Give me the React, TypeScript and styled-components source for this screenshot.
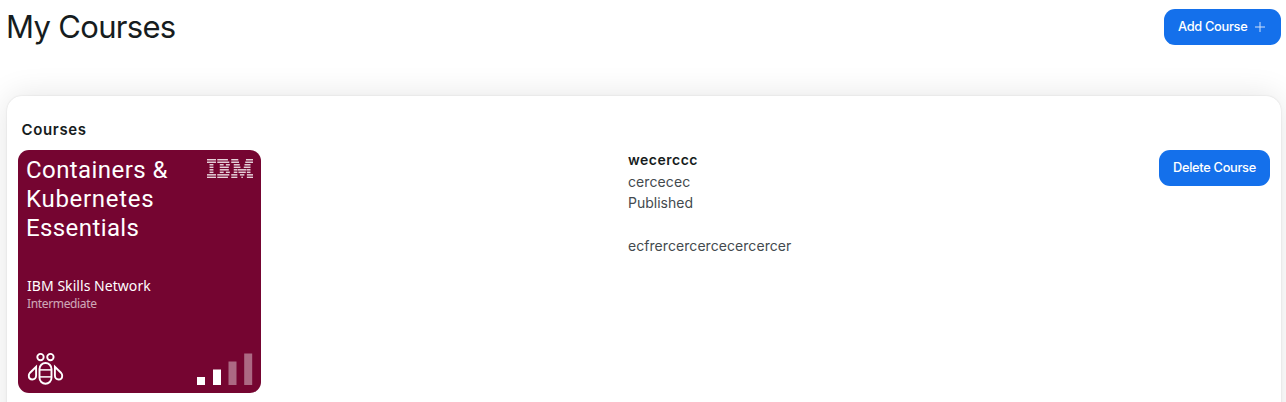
import React from "react";
import styled, { createGlobalStyle } from "styled-components";

const GlobalStyle = createGlobalStyle`
  * { box-sizing: border-box; }
  body { margin: 0; background: #fff; color: #161c20; font-family: Inter, "Open Sans", sans-serif; }
`;

const Page = styled.main`
  height: 100vh;
  overflow: hidden;
  padding: 9px 5px 0 7px;
`;

const Header = styled.header`
  display: flex;
  justify-content: space-between;
  align-items: flex-start;
  height: 87px;
`;

const Title = styled.h1`
  margin: 0 0 0 -1px;
  font-size: 31px;
  line-height: 36px;
  font-weight: 400;
  letter-spacing: -0.68px;
  white-space: nowrap;
`;

const Button = styled.button<{ $width: number }>`
  display: flex;
  align-items: center;
  gap: 7px;
  width: ${(p) => p.$width}px;
  height: 36px;
  padding: 0 14px 1px;
  border: 0;
  border-radius: 11px;
  background: #1470eb;
  color: #fff;
  font: 500 12.8px/20px Inter, sans-serif;
  letter-spacing: -0.3px;
  white-space: nowrap;
`;

const Panel = styled.section`
  height: 420px;
  padding: 22px 11px 0;
  border-radius: 15px;
  background: #fff;
  box-shadow: 0 0 2px rgba(0, 0, 0, 0.12), 0 0 32px rgba(0, 0, 0, 0.11);
`;

const PanelTitle = styled.h2`
  margin: 0 0 8px 3.5px;
  font-size: 15px;
  line-height: 24px;
  font-weight: 600;
  letter-spacing: 0.65px;
`;

const CourseRow = styled.article`
  display: grid;
  grid-template-columns: 610px 1fr auto;
  align-items: start;
`;

const Cover = styled.div`
  display: flex;
  flex-direction: column;
  width: 243px;
  height: 243px;
  padding: 5px 8px 8px 9px;
  border-radius: 11px;
  background: #750531;
  color: #fff;
  font-family: "Noto Sans", sans-serif;
`;

const CoverTop = styled.div`
  display: flex;
  justify-content: space-between;
  height: 122px;

  svg { margin-top: 4px; }
`;

const CoverHeading = styled.div`
  padding-top: 1px;
`;

const CoverLine = styled.div<{ $spacing: number }>`
  margin-left: -1px;
  font-family: Roboto, sans-serif;
  font-size: 24px;
  line-height: 29px;
  letter-spacing: ${(p) => p.$spacing}px;
  white-space: nowrap;
`;

const Provider = styled.div`
  font-size: 14px;
  line-height: 18px;
  letter-spacing: 0.05px;
`;

const Level = styled.div`
  font-size: 12px;
  line-height: 17px;
  letter-spacing: -0.35px;
  opacity: 0.65;
`;

const CoverBottom = styled.div`
  display: flex;
  justify-content: space-between;
  align-items: flex-end;
  margin-top: auto;
`;

const Details = styled.div`
  margin-top: -1px;
  font-size: 14px;
  line-height: 21.6px;
  color: #434a4e;
`;

const Name = styled.h3`
  margin: 0;
  font-size: 14px;
  line-height: 21.6px;
  font-weight: 600;
  letter-spacing: 0.5px;
  color: #161c20;
`;

const DetailLine = styled.p<{ $spacing?: number; $gap?: number }>`
  margin: ${(p) => p.$gap ?? 0}px 0 0;
  letter-spacing: ${(p) => p.$spacing ?? 0}px;
`;

const IBM_STRIPES: [number, number][][] = [
  [[0, 195], [223, 455], [527, 680], [847, 1000]],
  [[0, 195], [223, 484], [527, 696], [831, 1000]],
  [[55, 140], [277, 362], [410, 496], [581, 712], [815, 946]],
  [[55, 140], [277, 474], [581, 727], [799, 946]],
  [[55, 140], [277, 474], [581, 660], [668, 859], [867, 946]],
  [[55, 140], [277, 362], [410, 496], [581, 660], [684, 843], [867, 946]],
  [[0, 195], [223, 484], [527, 660], [715, 812], [867, 1000]],
  [[0, 195], [223, 455], [527, 660], [747, 780], [867, 1000]],
];

const IbmLogo = () => (
  <svg width="46" height="19" viewBox="0 0 1000 400" preserveAspectRatio="none" fill="#fff" opacity="0.82">
    {IBM_STRIPES.flatMap((row, y) =>
      row.map(([a, b]) => <rect key={`${y}-${a}`} x={a} y={y * 53} width={b - a} height="31" />)
    )}
  </svg>
);

const Bee = () => (
  <svg width="37" height="33" viewBox="0 0 37 33" fill="none" stroke="#fff" strokeWidth="1.9">
    <circle cx="13.5" cy="5.1" r="3.2" />
    <circle cx="23.4" cy="5.1" r="3.2" />
    <rect x="12.5" y="11" width="12" height="20.8" rx="6" />
    <path d="M12.5 17.9h12M12.5 24.9h12" opacity="0.85" />
    <path d="M9.1 14.8v8.7c0 2.2-1.5 4-3.7 4s-3.6-1.7-3.6-3.8c0-1.1.4-2 1-2.7z" />
    <path d="M27.9 14.8v8.7c0 2.2 1.5 4 3.7 4s3.6-1.7 3.6-3.8c0-1.1-.4-2-1-2.7z" />
  </svg>
);

const LevelBars = () => (
  <svg width="56" height="32" viewBox="0 0 56 32" fill="#fff">
    <rect x="0" y="24" width="8" height="8" />
    <rect x="16" y="16.5" width="8" height="15.5" />
    <rect x="31.5" y="8.5" width="8" height="23.5" opacity="0.4" />
    <rect x="47.2" y="0.5" width="8" height="31.5" opacity="0.4" />
  </svg>
);

const Plus = () => (
  <svg width="12" height="12" viewBox="0 0 12 12" stroke="#fff" strokeWidth="1" opacity="0.8">
    <path d="M1 6h10M6 1v10" />
  </svg>
);

export default function App() {
  return (
    <>
      <GlobalStyle />
      <Page>
        <Header>
          <Title>My Courses</Title>
          <Button $width={117}>Add Course <Plus /></Button>
        </Header>
        <Panel>
          <PanelTitle>Courses</PanelTitle>
          <CourseRow>
            <Cover>
              <CoverTop>
                <CoverHeading>
                  <CoverLine $spacing={0.42}>Containers &amp;</CoverLine>
                  <CoverLine $spacing={0.7}>Kubernetes</CoverLine>
                  <CoverLine $spacing={0.4}>Essentials</CoverLine>
                </CoverHeading>
                <IbmLogo />
              </CoverTop>
              <Provider>IBM Skills Network</Provider>
              <Level>Intermediate</Level>
              <CoverBottom>
                <Bee />
                <LevelBars />
              </CoverBottom>
            </Cover>
            <Details>
              <Name>wecerccc</Name>
              <DetailLine $spacing={0.1}>cercecec</DetailLine>
              <DetailLine>Published</DetailLine>
              <DetailLine $gap={21.6} $spacing={0.06}>ecfrercercercecercercer</DetailLine>
            </Details>
            <Button $width={111}>Delete Course</Button>
          </CourseRow>
        </Panel>
      </Page>
    </>
  );
}
